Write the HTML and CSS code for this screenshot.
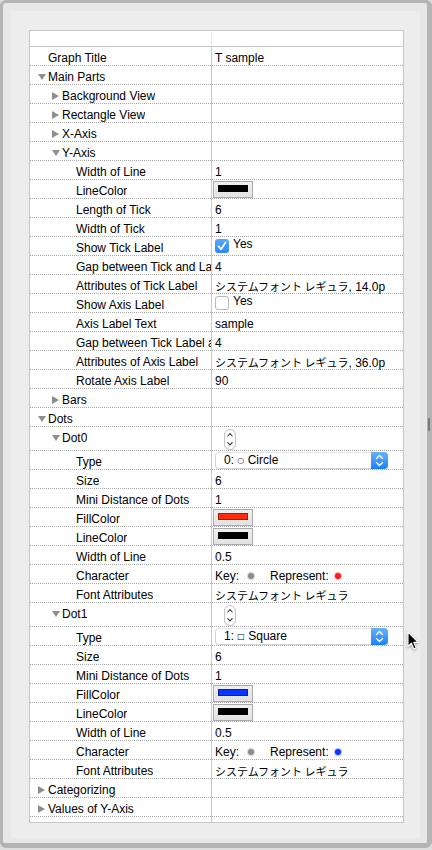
FILE: index.html
```html
<!DOCTYPE html>
<html>
<head>
<meta charset="utf-8">
<link rel="stylesheet" href="styles.css">
</head>
<body>
<div class="window">
  <div class="panel">
    <div class="table">
      <div class="header"><div class="hdiv"></div></div>
      <div class="rows">
        <div class="row"><div class="lab l0"><span class="slot"></span><span class="t">Graph Title</span></div><div class="val"><span class="t">T sample</span></div></div>
        <div class="row"><div class="lab l0"><span class="slot"><i class="tri-d"></i></span><span class="t">Main Parts</span></div><div class="val"></div></div>
        <div class="row"><div class="lab l1"><span class="slot"><i class="tri-r"></i></span><span class="t">Background View</span></div><div class="val"></div></div>
        <div class="row"><div class="lab l1"><span class="slot"><i class="tri-r"></i></span><span class="t">Rectangle View</span></div><div class="val"></div></div>
        <div class="row"><div class="lab l1"><span class="slot"><i class="tri-r"></i></span><span class="t">X-Axis</span></div><div class="val"></div></div>
        <div class="row"><div class="lab l1"><span class="slot"><i class="tri-d"></i></span><span class="t">Y-Axis</span></div><div class="val"></div></div>
        <div class="row"><div class="lab l2"><span class="slot"></span><span class="t">Width of Line</span></div><div class="val"><span class="t">1</span></div></div>
        <div class="row"><div class="lab l2"><span class="slot"></span><span class="t">LineColor</span></div><div class="val"><span class="swatch"><i class="chip black"></i></span></div></div>
        <div class="row"><div class="lab l2"><span class="slot"></span><span class="t">Length of Tick</span></div><div class="val"><span class="t">6</span></div></div>
        <div class="row"><div class="lab l2"><span class="slot"></span><span class="t">Width of Tick</span></div><div class="val"><span class="t">1</span></div></div>
        <div class="row"><div class="lab l2"><span class="slot"></span><span class="t">Show Tick Label</span></div><div class="val"><span class="check on"><svg width="14" height="14" viewBox="0 0 14 14"><path d="M3.6 7.4 L6 10.2 L10.6 3.4" fill="none" stroke="#fff" stroke-width="1.7" stroke-linecap="round" stroke-linejoin="round"/></svg></span><span class="yes">Yes</span></div></div>
        <div class="row"><div class="lab l2"><span class="slot"></span><span class="t">Gap between Tick and La</span></div><div class="val"><span class="t">4</span></div></div>
        <div class="row"><div class="lab l2"><span class="slot"></span><span class="t">Attributes of Tick Label</span></div><div class="val"><span class="t"><span class="ja">システムフォント レギュラ</span>, 14.0p</span></div></div>
        <div class="row"><div class="lab l2"><span class="slot"></span><span class="t">Show Axis Label</span></div><div class="val"><span class="check"></span><span class="yes">Yes</span></div></div>
        <div class="row"><div class="lab l2"><span class="slot"></span><span class="t">Axis Label Text</span></div><div class="val"><span class="t">sample</span></div></div>
        <div class="row"><div class="lab l2"><span class="slot"></span><span class="t">Gap between Tick Label a</span></div><div class="val"><span class="t">4</span></div></div>
        <div class="row"><div class="lab l2"><span class="slot"></span><span class="t">Attributes of Axis Label</span></div><div class="val"><span class="t"><span class="ja">システムフォント レギュラ</span>, 36.0p</span></div></div>
        <div class="row"><div class="lab l2"><span class="slot"></span><span class="t">Rotate Axis Label</span></div><div class="val"><span class="t">90</span></div></div>
        <div class="row"><div class="lab l1"><span class="slot"><i class="tri-r"></i></span><span class="t">Bars</span></div><div class="val"></div></div>
        <div class="row"><div class="lab l0"><span class="slot"><i class="tri-d"></i></span><span class="t">Dots</span></div><div class="val"></div></div>

        <div class="row tall"><div class="lab l1"><span class="slot"><i class="tri-d"></i></span><span class="t">Dot0</span></div><div class="val"><span class="stepper"><svg width="12" height="21" viewBox="0 0 12 21"><path d="M3.8 7 L6 4.6 L8.2 7 M3.8 13.6 L6 16 L8.2 13.6" fill="none" stroke="#333" stroke-width="1.1" stroke-linecap="round" stroke-linejoin="round"/></svg></span></div></div>
        <div class="row"><div class="lab l2"><span class="slot"></span><span class="t">Type</span></div><div class="val"><span class="popup"><span class="ptext">0: <span class="sym">○</span> Circle</span><span class="pbtn"><svg width="17" height="17" viewBox="0 0 17 17"><path d="M5.5 6.5 L8.5 3.5 L11.5 6.5 M5.5 10.5 L8.5 13.5 L11.5 10.5" fill="none" stroke="#fff" stroke-width="1.4" stroke-linecap="round" stroke-linejoin="round"/></svg></span></span></div></div>
        <div class="row"><div class="lab l2"><span class="slot"></span><span class="t">Size</span></div><div class="val"><span class="t">6</span></div></div>
        <div class="row"><div class="lab l2"><span class="slot"></span><span class="t">Mini Distance of Dots</span></div><div class="val"><span class="t">1</span></div></div>
        <div class="row"><div class="lab l2"><span class="slot"></span><span class="t">FillColor</span></div><div class="val"><span class="swatch"><i class="chip red"></i></span></div></div>
        <div class="row"><div class="lab l2"><span class="slot"></span><span class="t">LineColor</span></div><div class="val"><span class="swatch"><i class="chip black"></i></span></div></div>
        <div class="row"><div class="lab l2"><span class="slot"></span><span class="t">Width of Line</span></div><div class="val"><span class="t">0.5</span></div></div>
        <div class="row"><div class="lab l2"><span class="slot"></span><span class="t">Character</span></div><div class="val"><span class="t">Key:</span><i class="dot gray"></i><span class="t rep">Represent:</span><i class="dot red"></i></div></div>
        <div class="row"><div class="lab l2"><span class="slot"></span><span class="t">Font Attributes</span></div><div class="val"><span class="t"><span class="ja">システムフォント レギュラ</span></span></div></div>

        <div class="row tall"><div class="lab l1"><span class="slot"><i class="tri-d"></i></span><span class="t">Dot1</span></div><div class="val"><span class="stepper"><svg width="12" height="21" viewBox="0 0 12 21"><path d="M3.8 7 L6 4.6 L8.2 7 M3.8 13.6 L6 16 L8.2 13.6" fill="none" stroke="#333" stroke-width="1.1" stroke-linecap="round" stroke-linejoin="round"/></svg></span></div></div>
        <div class="row"><div class="lab l2"><span class="slot"></span><span class="t">Type</span></div><div class="val"><span class="popup"><span class="ptext">1: <span class="sym">□</span> Square</span><span class="pbtn"><svg width="17" height="17" viewBox="0 0 17 17"><path d="M5.5 6.5 L8.5 3.5 L11.5 6.5 M5.5 10.5 L8.5 13.5 L11.5 10.5" fill="none" stroke="#fff" stroke-width="1.4" stroke-linecap="round" stroke-linejoin="round"/></svg></span></span></div></div>
        <div class="row"><div class="lab l2"><span class="slot"></span><span class="t">Size</span></div><div class="val"><span class="t">6</span></div></div>
        <div class="row"><div class="lab l2"><span class="slot"></span><span class="t">Mini Distance of Dots</span></div><div class="val"><span class="t">1</span></div></div>
        <div class="row"><div class="lab l2"><span class="slot"></span><span class="t">FillColor</span></div><div class="val"><span class="swatch"><i class="chip blue"></i></span></div></div>
        <div class="row"><div class="lab l2"><span class="slot"></span><span class="t">LineColor</span></div><div class="val"><span class="swatch"><i class="chip black"></i></span></div></div>
        <div class="row"><div class="lab l2"><span class="slot"></span><span class="t">Width of Line</span></div><div class="val"><span class="t">0.5</span></div></div>
        <div class="row"><div class="lab l2"><span class="slot"></span><span class="t">Character</span></div><div class="val"><span class="t">Key:</span><i class="dot gray"></i><span class="t rep">Represent:</span><i class="dot blue"></i></div></div>
        <div class="row"><div class="lab l2"><span class="slot"></span><span class="t">Font Attributes</span></div><div class="val"><span class="t"><span class="ja">システムフォント レギュラ</span></span></div></div>

        <div class="row"><div class="lab l0"><span class="slot"><i class="tri-r"></i></span><span class="t">Categorizing</span></div><div class="val"></div></div>
        <div class="row"><div class="lab l0"><span class="slot"><i class="tri-r"></i></span><span class="t">Values of Y-Axis</span></div><div class="val"></div></div>
      </div>
    </div>
  </div>
</div>
<div class="scroll"></div>
<svg class="cursor" width="14" height="21" viewBox="0 0 14 21"><path d="M1 1 L1 15.5 L4.4 12.2 L6.9 18 L9.1 17 L6.7 11.4 L11.2 11.4 Z" fill="#000" stroke="#fff" stroke-width="1.1" stroke-linejoin="round"/></svg>
</body>
</html>
```
FILE: styles.css
```css
html, body {
  margin: 0;
  padding: 0;
}
body {
  width: 432px;
  height: 850px;
  background: #dedede;
  font-family: "Liberation Sans", "Noto Sans CJK JP", sans-serif;
  font-size: 12px;
  color: #000;
  position: relative;
  overflow: hidden;
}
.window {
  width: 432px;
  height: 848px;
  box-sizing: border-box;
  border-style: solid;
  border-color: #b4b4b4;
  border-width: 3px 5px 5px 3px;
  border-radius: 6px;
  background: #e7e7e7;
  padding: 8px 7px 5px 8px;
}
.panel {
  height: 100%;
  box-sizing: border-box;
  background: #ededed;
  padding: 19px 16px 0 18px;
}
.table {
  width: 375px;
  box-sizing: border-box;
  border: 1px solid #c6c6c6;
  background: #fff;
}
.header {
  height: 16px;
  box-sizing: border-box;
  border-bottom: 1px solid #c6c6c6;
  display: flex;
  align-items: center;
}
.hdiv {
  width: 1px;
  height: 11px;
  margin-left: 181px;
  background: #e3e3e3;
}
.rows {
  padding-bottom: 5px;
  background: linear-gradient(to right, transparent 181px, #cacaca 181px, #cacaca 182px, transparent 182px);
}
.row {
  display: flex;
  height: 19px;
  box-sizing: border-box;
  border-bottom: 1px dotted #a9a9a9;
}
.row.tall {
  height: 24px;
}
.lab {
  width: 181px;
  flex: none;
  margin-right: 1px;
  display: flex;
  align-items: flex-start;
  overflow: hidden;
  box-sizing: border-box;
}
.l0 { padding-left: 8px; }
.l1 { padding-left: 22px; }
.l2 { padding-left: 36px; }
.slot {
  width: 10px;
  flex: none;
  display: flex;
}
.tri-r {
  display: block;
  width: 0;
  height: 0;
  margin-top: 7px;
  border-left: 7px solid #8e8e8e;
  border-top: 4px solid transparent;
  border-bottom: 4px solid transparent;
}
.tri-d {
  display: block;
  width: 0;
  height: 0;
  margin-top: 8px;
  border-top: 6px solid #8e8e8e;
  border-left: 4px solid transparent;
  border-right: 4px solid transparent;
}
.t {
  display: block;
  padding-top: 5px;
  line-height: 13px;
  white-space: nowrap;
}
.lab .t {
  min-width: 0;
  overflow: hidden;
}
.val {
  flex: 1;
  display: flex;
  align-items: flex-start;
  padding-left: 3px;
  min-width: 0;
}
.ja {
  font-family: "Noto Sans CJK JP", sans-serif;
  font-size: 11px;
}
.swatch {
  display: block;
  margin-left: -2px;
  margin-top: 1px;
  width: 40px;
  height: 17px;
  box-sizing: border-box;
  border: 1px solid #ababab;
  background: linear-gradient(#efefef, #e2e2e2);
  padding: 3px 0 0 4px;
}
.chip {
  display: block;
  width: 30px;
  height: 7px;
  box-sizing: border-box;
  border: 1px solid rgba(0, 0, 0, 0.35);
}
.chip.black { background: #000; }
.chip.red { background: #ff2b0f; }
.chip.blue { background: #0a35ff; }
.check {
  display: block;
  width: 14px;
  height: 14px;
  margin-top: 2px;
  box-sizing: border-box;
  border-radius: 3px;
  border: 1px solid #b8b8b8;
  background: #fff;
}
.check.on {
  border: none;
  background: linear-gradient(#5aa9fb, #2c86f7);
}
.check svg { display: block; }
.yes {
  display: block;
  margin-left: 4px;
  padding-top: 1px;
  line-height: 13px;
}
.stepper {
  display: block;
  margin-left: 9px;
  margin-top: 2px;
  width: 12px;
  height: 21px;
  box-sizing: border-box;
  border: 1px solid #c2c2c2;
  border-radius: 6px;
  background: #fff;
  box-shadow: 0 0.5px 0.5px rgba(0, 0, 0, 0.08);
  overflow: hidden;
}
.stepper svg {
  display: block;
  margin: -1px 0 0 -1px;
}
.popup {
  display: flex;
  margin-top: 1px;
  width: 173px;
  height: 17px;
  box-sizing: border-box;
  border: 1px solid #d2d2d2;
  border-top-color: #e4e4e4;
  border-radius: 4px;
  background: #fff;
}
.ptext {
  flex: 1;
  padding: 1px 0 0 8px;
  line-height: 13px;
  white-space: nowrap;
}
.sym {
  font-family: "DejaVu Sans", sans-serif;
  font-size: 8px;
  vertical-align: 1px;
}
.pbtn {
  width: 17px;
  margin: -1px -1px -1px 0;
  border-radius: 0 4px 4px 0;
  background: linear-gradient(#69b4fb, #1b80f7);
}
.pbtn svg { display: block; }
.dot {
  display: block;
  width: 6px;
  height: 6px;
  border-radius: 50%;
  margin-top: 8px;
}
.dot.gray {
  margin-left: 9px;
  background: #8c8c8c;
  box-shadow: 0 0 1px 1px rgba(140, 140, 140, 0.35);
}
.dot.red {
  margin-left: 6px;
  background: #ff1c1c;
  box-shadow: 0 0 1px 1px rgba(255, 40, 40, 0.35);
}
.dot.blue {
  margin-left: 6px;
  background: #1234ff;
  box-shadow: 0 0 1px 1px rgba(30, 60, 255, 0.35);
}
.rep {
  margin-left: 16px;
}
.scroll {
  position: absolute;
  left: 428px;
  top: 418px;
  width: 2px;
  height: 13px;
  border-radius: 1px;
  background: #7a7a7a;
}
.cursor {
  position: absolute;
  left: 407px;
  top: 631px;
  filter: drop-shadow(0 1px 1px rgba(0, 0, 0, 0.35));
}
```
